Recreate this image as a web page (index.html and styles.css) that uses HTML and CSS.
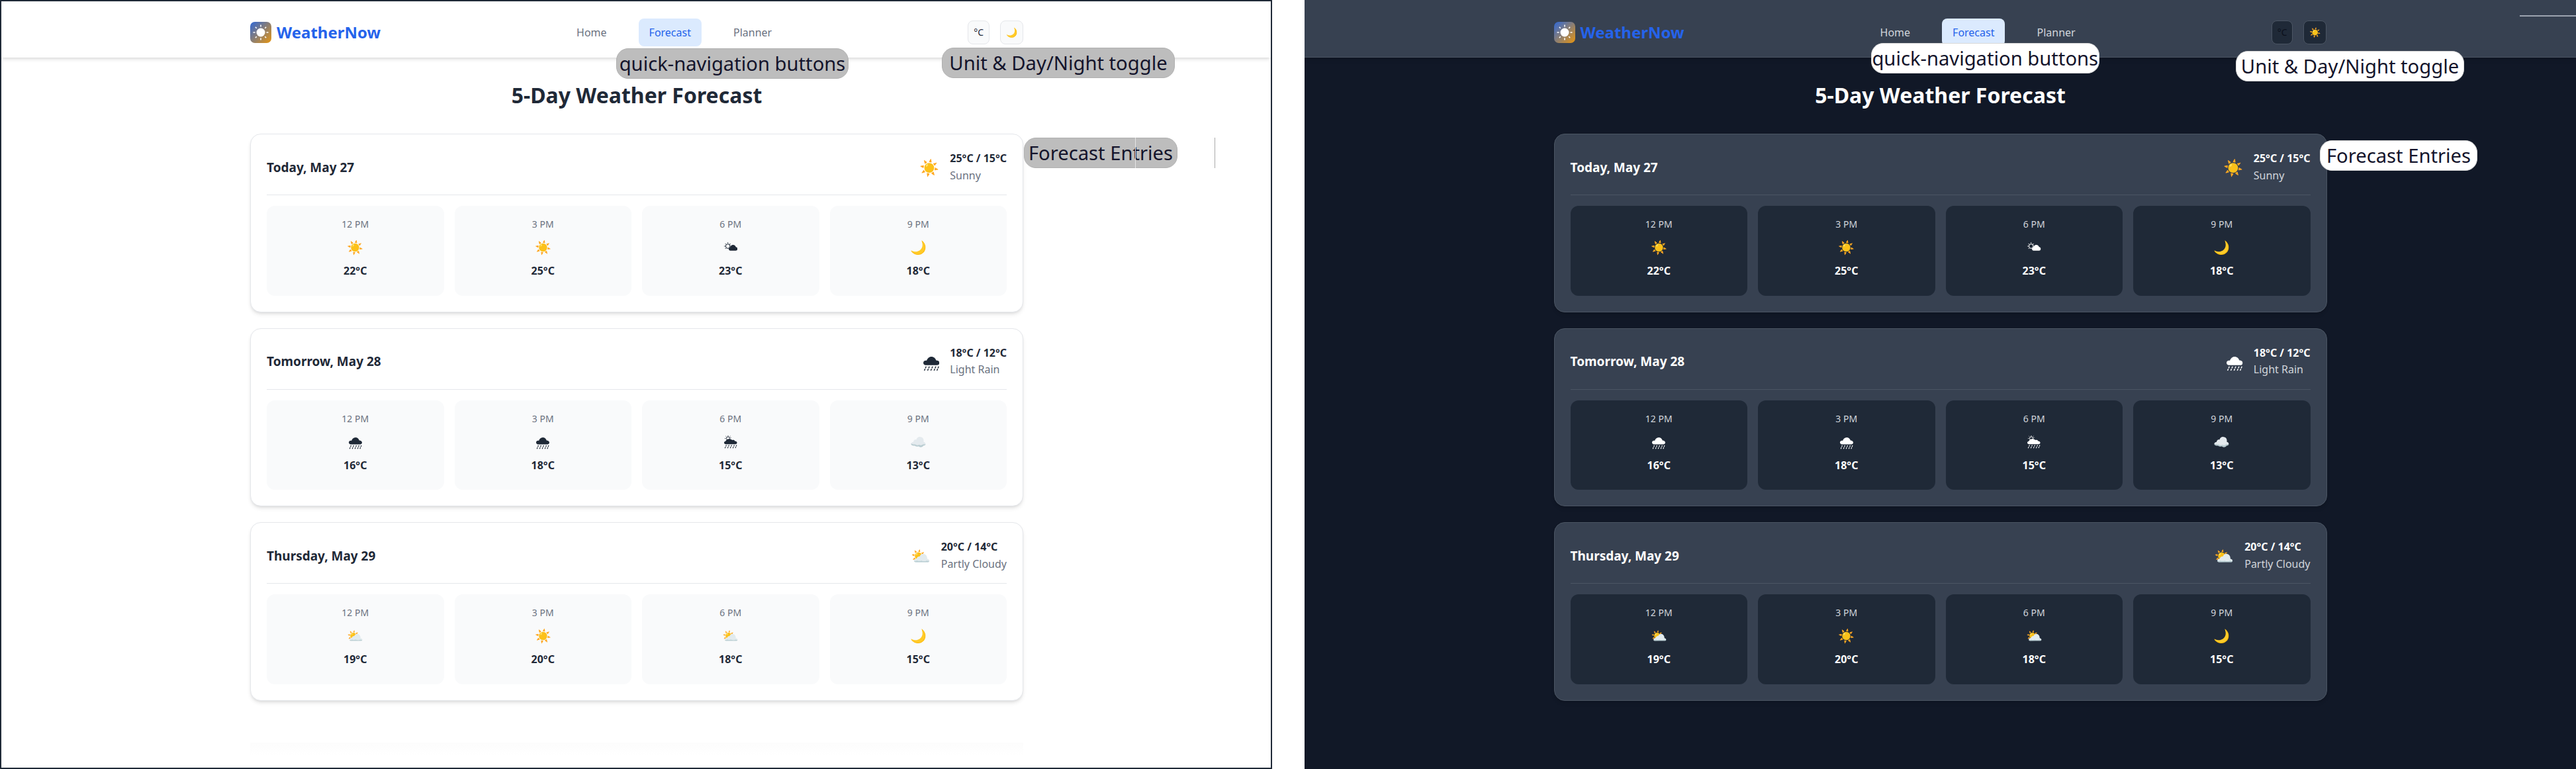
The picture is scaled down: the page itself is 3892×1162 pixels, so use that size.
FILE: index.html
```html
<!DOCTYPE html>
<html lang="en">
<head>
<meta charset="utf-8">
<title>WeatherNow</title>
<link rel="stylesheet" href="styles.css">
</head>
<body>
<svg class="sprite" aria-hidden="true">
  <symbol id="i-rain" viewBox="0 0 20 18">
    <path fill="currentColor" d="M3 10.500C1.200 10.500 0 9.200 0 7.600C0 6 1.300 4.800 3 4.800C3.400 4.800 3.800 4.900 4.100 5C4.900 2.200 7.200 0 10 0C12.800 0 15.100 1.900 15.800 4.600C18.200 4.600 20 6 20 7.700C20 9.300 18.600 10.500 17 10.500Z"/>
    <path fill="none" stroke="currentColor" stroke-width="1.150" stroke-dasharray="2.400 .9" d="M3.500 12L1 17.800M7.500 12L5 17.800M11.500 12L9 17.800M15.500 12L13 17.800M19 12L16.800 17.200"/>
  </symbol>
  <symbol id="i-sun-cloud" viewBox="0 0 20.500 13">
    <circle cx="5.700" cy="6" r="3.200" fill="none" stroke="currentColor" stroke-width="1.100"/>
    <path stroke="currentColor" stroke-width="1" d="M5.700 0v1.500M0 6h1.500M1.700 2l1 1M9.700 2l-1 1M1.700 10l1-1"/>
    <path fill="currentColor" d="M9.500 12.700C8 12.700 7 11.700 7 10.500C7 9.300 8 8.400 9 8.300C9.300 5.800 11.300 4 13.600 4C15.700 4 17.300 5.300 17.800 7.200C19.300 7.400 20.500 8.600 20.500 10C20.500 11.500 19.200 12.700 17.800 12.700Z"/>
  </symbol>
  <symbol id="i-sun-rain" viewBox="0 0 20 20">
    <circle cx="6" cy="4.500" r="2.600" fill="none" stroke="currentColor" stroke-width="1"/>
    <path stroke="currentColor" stroke-width=".9" d="M6 0v1.200M1 4.500h1.200M10.500 3.500h-1M2.400 1l.9.900M9.600 1l-.9.900"/>
    <path fill="currentColor" d="M2.500 13.200C1 13.200 0 12.200 0 11C0 9.800 1 8.900 2.200 8.800C3 6.400 5.500 4.800 8.500 5.200C10.200 5.400 11.500 6.200 12.400 7C13.600 6.700 15.500 6.800 16.300 8.400C18.200 8.300 19.600 9.600 19.600 11C19.600 12.200 18.600 13.200 17.200 13.200Z"/>
    <path fill="none" stroke="currentColor" stroke-width="1.100" stroke-dasharray="2.200 .9" d="M3.500 14.500L1 20M7.500 14.500L5 20M11.500 14.500L9 20M15.500 14.500L13 20M19 14.500L17 19"/>
  </symbol>
</svg>
<div class="stage">
<section class="panel light">
  <header class="topbar">
    <div class="bar-inner">
      <div class="brand">
        <svg class="logo" viewBox="0 0 32 32"><defs><linearGradient id="g1" x1="0" y1="0" x2="1" y2="1"><stop offset="0" stop-color="#2f68d8"/><stop offset="1" stop-color="#e8950f"/></linearGradient></defs><rect width="32" height="32" rx="7" fill="url(#g1)"/><circle cx="16" cy="16" r="6.500" fill="#fff"/><path stroke="#fff" stroke-width="1.600" d="M16 4.500v3M16 24.500v3M4.500 16h3M24.500 16h3M7.900 7.900l1.800 1.800M22.300 22.300l1.800 1.800M7.900 24.100l1.800-1.800M22.300 9.700l1.800-1.800"/></svg>
        <span class="brand-name">WeatherNow</span>
      </div>
      <nav class="nav"><a class="nav-item">Home</a><a class="nav-item active">Forecast</a><a class="nav-item">Planner</a></nav>
      <div class="toggles"><button class="toggle">°C</button><button class="toggle">🌙</button></div>
    </div>
  </header>
  <main class="content">
    <h1 class="title">5-Day Weather Forecast</h1>
    <article class="card">
      <div class="card-head"><h2 class="date">Today, May 27</h2><div class="summary"><span class="sum-icon">☀️</span><div><div class="range">25°C / 15°C</div><div class="cond">Sunny</div></div></div></div>
      <div class="hours">
        <div class="hour"><div class="h-time">12 PM</div><div class="h-icon">☀️</div><div class="h-temp">22°C</div></div>
        <div class="hour"><div class="h-time">3 PM</div><div class="h-icon">☀️</div><div class="h-temp">25°C</div></div>
        <div class="hour"><div class="h-time">6 PM</div><div class="h-icon"><svg class="g-sun-cloud"><use href="#i-sun-cloud"/></svg></div><div class="h-temp">23°C</div></div>
        <div class="hour"><div class="h-time">9 PM</div><div class="h-icon">🌙</div><div class="h-temp">18°C</div></div>
      </div>
    </article>
    <article class="card">
      <div class="card-head"><h2 class="date">Tomorrow, May 28</h2><div class="summary"><svg class="g-rain-lg"><use href="#i-rain"/></svg><div><div class="range">18°C / 12°C</div><div class="cond">Light Rain</div></div></div></div>
      <div class="hours">
        <div class="hour"><div class="h-time">12 PM</div><div class="h-icon"><svg class="g-rain"><use href="#i-rain"/></svg></div><div class="h-temp">16°C</div></div>
        <div class="hour"><div class="h-time">3 PM</div><div class="h-icon"><svg class="g-rain"><use href="#i-rain"/></svg></div><div class="h-temp">18°C</div></div>
        <div class="hour"><div class="h-time">6 PM</div><div class="h-icon"><svg class="g-sun-rain"><use href="#i-sun-rain"/></svg></div><div class="h-temp">15°C</div></div>
        <div class="hour"><div class="h-time">9 PM</div><div class="h-icon">☁️</div><div class="h-temp">13°C</div></div>
      </div>
    </article>
    <article class="card">
      <div class="card-head"><h2 class="date">Thursday, May 29</h2><div class="summary"><span class="sum-icon">⛅</span><div><div class="range">20°C / 14°C</div><div class="cond">Partly Cloudy</div></div></div></div>
      <div class="hours">
        <div class="hour"><div class="h-time">12 PM</div><div class="h-icon">⛅</div><div class="h-temp">19°C</div></div>
        <div class="hour"><div class="h-time">3 PM</div><div class="h-icon">☀️</div><div class="h-temp">20°C</div></div>
        <div class="hour"><div class="h-time">6 PM</div><div class="h-icon">⛅</div><div class="h-temp">18°C</div></div>
        <div class="hour"><div class="h-time">9 PM</div><div class="h-icon">🌙</div><div class="h-temp">15°C</div></div>
      </div>
    </article>
    <div class="ghost"></div>
  </main>
  <span class="tag tag-nav">quick-navigation buttons</span>
  <span class="tag tag-unit">Unit &amp; Day/Night toggle</span>
  <span class="tag tag-entries">Forecast Entries</span>
  <i class="mark mark-white"></i>
  <i class="mark mark-gray"></i>
</section>
<section class="panel dark">
  <header class="topbar">
    <div class="bar-inner">
      <div class="brand">
        <svg class="logo" viewBox="0 0 32 32"><defs><linearGradient id="g2" x1="0" y1="0" x2="1" y2="1"><stop offset="0" stop-color="#2f68d8"/><stop offset="1" stop-color="#e8950f"/></linearGradient></defs><rect width="32" height="32" rx="7" fill="url(#g2)"/><circle cx="16" cy="16" r="6.500" fill="#fff"/><path stroke="#fff" stroke-width="1.600" d="M16 4.500v3M16 24.500v3M4.500 16h3M24.500 16h3M7.900 7.900l1.800 1.800M22.300 22.300l1.800 1.800M7.900 24.100l1.800-1.800M22.300 9.700l1.800-1.800"/></svg>
        <span class="brand-name">WeatherNow</span>
      </div>
      <nav class="nav"><a class="nav-item">Home</a><a class="nav-item active">Forecast</a><a class="nav-item">Planner</a></nav>
      <div class="toggles"><button class="toggle">°C</button><button class="toggle">☀️</button></div>
    </div>
  </header>
  <main class="content">
    <h1 class="title">5-Day Weather Forecast</h1>
    <article class="card">
      <div class="card-head"><h2 class="date">Today, May 27</h2><div class="summary"><span class="sum-icon">☀️</span><div><div class="range">25°C / 15°C</div><div class="cond">Sunny</div></div></div></div>
      <div class="hours">
        <div class="hour"><div class="h-time">12 PM</div><div class="h-icon">☀️</div><div class="h-temp">22°C</div></div>
        <div class="hour"><div class="h-time">3 PM</div><div class="h-icon">☀️</div><div class="h-temp">25°C</div></div>
        <div class="hour"><div class="h-time">6 PM</div><div class="h-icon"><svg class="g-sun-cloud"><use href="#i-sun-cloud"/></svg></div><div class="h-temp">23°C</div></div>
        <div class="hour"><div class="h-time">9 PM</div><div class="h-icon">🌙</div><div class="h-temp">18°C</div></div>
      </div>
    </article>
    <article class="card">
      <div class="card-head"><h2 class="date">Tomorrow, May 28</h2><div class="summary"><svg class="g-rain-lg"><use href="#i-rain"/></svg><div><div class="range">18°C / 12°C</div><div class="cond">Light Rain</div></div></div></div>
      <div class="hours">
        <div class="hour"><div class="h-time">12 PM</div><div class="h-icon"><svg class="g-rain"><use href="#i-rain"/></svg></div><div class="h-temp">16°C</div></div>
        <div class="hour"><div class="h-time">3 PM</div><div class="h-icon"><svg class="g-rain"><use href="#i-rain"/></svg></div><div class="h-temp">18°C</div></div>
        <div class="hour"><div class="h-time">6 PM</div><div class="h-icon"><svg class="g-sun-rain"><use href="#i-sun-rain"/></svg></div><div class="h-temp">15°C</div></div>
        <div class="hour"><div class="h-time">9 PM</div><div class="h-icon">☁️</div><div class="h-temp">13°C</div></div>
      </div>
    </article>
    <article class="card">
      <div class="card-head"><h2 class="date">Thursday, May 29</h2><div class="summary"><span class="sum-icon">⛅</span><div><div class="range">20°C / 14°C</div><div class="cond">Partly Cloudy</div></div></div></div>
      <div class="hours">
        <div class="hour"><div class="h-time">12 PM</div><div class="h-icon">⛅</div><div class="h-temp">19°C</div></div>
        <div class="hour"><div class="h-time">3 PM</div><div class="h-icon">☀️</div><div class="h-temp">20°C</div></div>
        <div class="hour"><div class="h-time">6 PM</div><div class="h-icon">⛅</div><div class="h-temp">18°C</div></div>
        <div class="hour"><div class="h-time">9 PM</div><div class="h-icon">🌙</div><div class="h-temp">15°C</div></div>
      </div>
    </article>
  </main>
  <span class="tag tag-nav">quick-navigation buttons</span>
  <span class="tag tag-unit">Unit &amp; Day/Night toggle</span>
  <span class="tag tag-entries">Forecast Entries</span>
  <i class="mark mark-line"></i>
</section>
</div>
</body>
</html>
```
FILE: styles.css
```css
* { box-sizing: border-box; }
html, body { margin: 0; padding: 0; background: #fff; }
body { font-family: "Noto Sans", sans-serif; overflow: hidden; }
.sprite { position: absolute; width: 0; height: 0; }
.stage { display: flex; justify-content: space-between; width: 3892px; height: 1162px; }

.panel { position: relative; height: 1162px; overflow: hidden; }
.light {
  width: 1922px; border: 2px solid #1f2937; padding-left: 2px; background: #fff;
  --bar: #fff; --bar-line: transparent; --ink: #1f2937; --muted: #6b7280; --nav: #6b7280;
  --card: #fff; --card-line: #e5e7eb; --rule: #e5e7eb; --slot: #f9fafb;
  --btn: #f9fafb; --btn-line: #e5e7eb; --btn-ink: #1f2937;
  --shadow: 0 4px 6px -1px rgba(0,0,0,.1), 0 2px 4px -2px rgba(0,0,0,.1);
}
.dark {
  width: 1921px; background: #111827;
  --bar: #374151; --bar-line: #4b5563; --ink: #fff; --muted: #d1d5db; --nav: #d1d5db;
  --card: #374151; --card-line: #4b5563; --rule: #4b5563; --slot: #1f2937;
  --btn: #1f2937; --btn-line: #4b5563; --btn-ink: #0b101c;
  --shadow: 0 4px 6px -1px rgba(0,0,0,.1), 0 2px 4px -2px rgba(0,0,0,.1);
}

.topbar { height: 87px; padding-top: 12px; background: var(--bar); border-bottom: 1px solid var(--bar-line); box-shadow: 0 4px 6px -1px rgba(0,0,0,.1), 0 2px 4px -2px rgba(0,0,0,.1); }
.light .topbar { margin: -2px 0 0 -2px; padding-left: 2px; }
.bar-inner { width: 1168px; height: 100%; margin: 0 auto; display: flex; align-items: center; justify-content: space-between; }
.brand { display: flex; align-items: center; gap: 8px; }
.logo { width: 32px; height: 32px; display: block; }
.brand-name { font-size: 24px; font-weight: 700; line-height: 32px; color: #2563eb; }
.nav { display: flex; gap: 32px; }
.nav-item { padding: 10px 16px; border-radius: 8px; font-size: 16px; line-height: 22px; color: var(--nav); }
.nav-item.active { background: #dbeafe; color: #2563eb; }
.toggles { display: flex; gap: 16px; }
.toggle { height: 36px; padding: 0 8px; border-radius: 8px; border: 1px solid var(--btn-line); background: var(--btn); color: var(--btn-ink); font-family: "Noto Sans", sans-serif; font-size: 14px; line-height: 20px; }

.content { width: 1168px; margin: 0 auto; padding-top: 33px; }
.title { margin: 0 0 34px; text-align: center; font-size: 32px; line-height: 48px; font-weight: 700; color: var(--ink); }
.card { border: 1px solid var(--card-line); border-radius: 16px; background: var(--card); padding: 24px; margin-bottom: 24px; box-shadow: var(--shadow); }
.card-head { display: flex; align-items: center; justify-content: space-between; padding-bottom: 16px; margin-bottom: 16px; border-bottom: 1px solid var(--rule); }
.date { margin: 0; font-size: 19px; line-height: 28px; font-weight: 700; color: var(--ink); }
.summary { display: flex; align-items: center; gap: 16px; }
.sum-icon { font-size: 24px; line-height: 32px; color: var(--ink); }
.range { font-size: 16px; line-height: 25.600px; font-weight: 700; color: var(--ink); }
.cond { font-size: 16px; line-height: 25.600px; color: var(--muted); }
.hours { display: grid; grid-template-columns: repeat(4, 1fr); gap: 16px; }
.hour { background: var(--slot); border-radius: 12px; padding: 16px; text-align: center; height: 135.400px; }
.h-time { font-size: 14px; line-height: 23px; color: var(--muted); }
.h-icon { display: flex; align-items: center; justify-content: center; height: 32px; font-size: 20px; line-height: 32px; margin: 8px 0 7px; color: var(--ink); }
.h-temp { font-size: 16px; line-height: 25.600px; font-weight: 700; color: var(--ink); }
.ghost { height: 20px; margin-top: 63px; background: linear-gradient(#fcfcfc, #fff); }

.g-rain { width: 20px; height: 18px; margin-top: 4px; color: var(--ink); }
.g-rain-lg { width: 24.500px; height: 22px; margin-top: 8px; color: var(--ink); }
.g-sun-cloud { width: 20.500px; height: 13px; margin-top: -4px; color: var(--ink); }
.g-sun-rain { width: 20px; height: 20px; color: var(--ink); }

.tag { position: absolute; height: 46px; display: flex; align-items: center; justify-content: center; white-space: nowrap; font-size: 29.200px; line-height: 44px; color: #14142b; border-radius: 18px; }
.light .tag { background: #bdbdbd; border: 1px solid #b0b0b0; }
.dark .tag { background: #fff; border: 1px solid #d8d8d8; }
.light .tag-nav { left: 929px; top: 71px; width: 351px; }
.light .tag-unit { left: 1421px; top: 70px; width: 352px; }
.light .tag-entries { left: 1545px; top: 206px; width: 232px; }
.dark .tag-nav { left: 855.500px; top: 65px; width: 345.500px; }
.dark .tag-unit { left: 1407px; top: 77px; width: 345px; }
.dark .tag-entries { left: 1534px; top: 212px; width: 238px; }
.mark { position: absolute; display: block; }
.mark-white { left: 1713px; top: 206px; width: 1px; height: 46px; background: #e4e4e4; }
.mark-gray { left: 1833px; top: 206px; width: 1px; height: 46px; background: #a9a9a9; }
.mark-line { left: 1836px; top: 23px; width: 85px; height: 2px; background: #9ca3af; }
```
